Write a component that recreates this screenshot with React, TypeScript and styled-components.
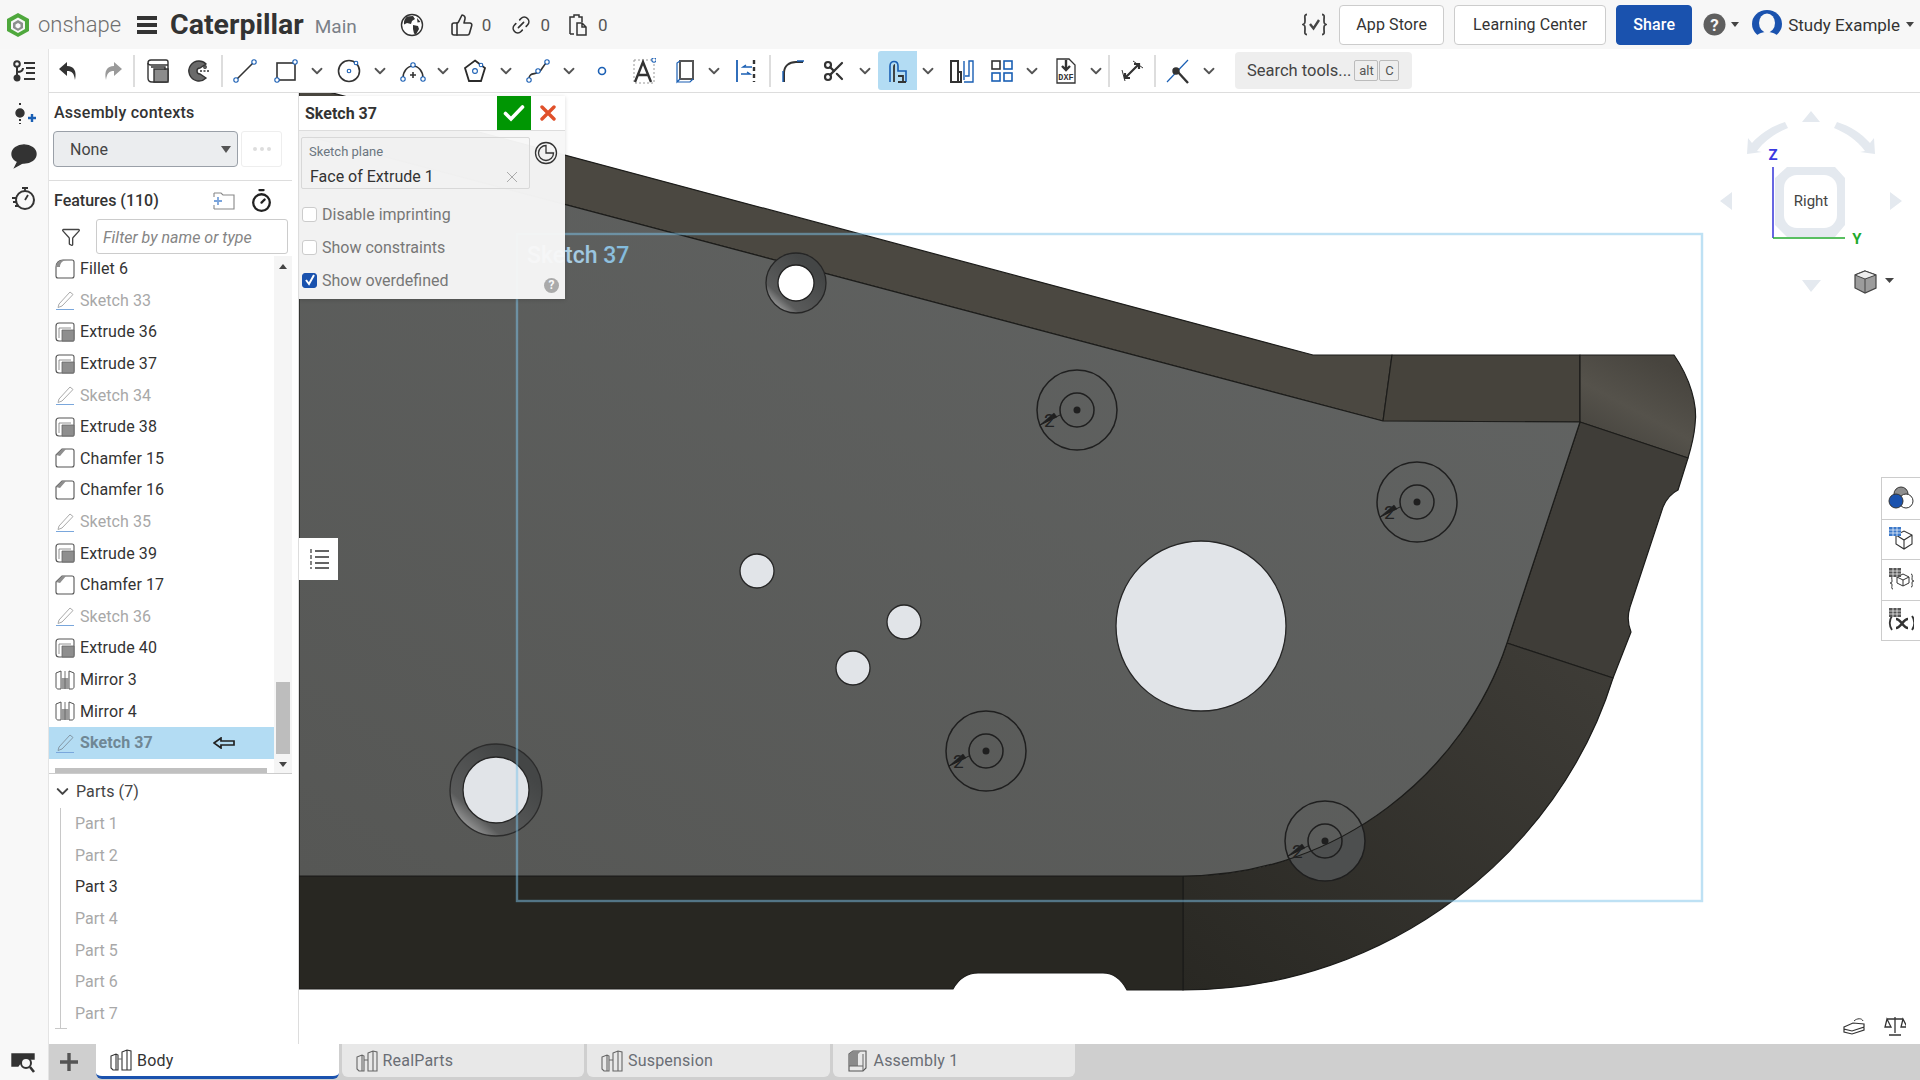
import React from "react";
import styled, { createGlobalStyle } from "styled-components";
import { ChevronDown, Filter, Link2, Scissors, ThumbsUp, Timer } from "lucide-react";

const Global = createGlobalStyle`
  html, body { margin: 0; padding: 0; background: #fff; }
  * { box-sizing: border-box; }
  body { font-family: Roboto, "Liberation Sans", sans-serif; color: #333; font-size: 16px; }
`;

const BLUE = "#1a5fb4";
const INK = "#333";

const Page = styled.div`
  width: 1920px;
  height: 1080px;
  overflow: hidden;
  display: flex;
  flex-direction: column;
`;

/* ---------- top bar ---------- */
const TopBar = styled.header`
  height: 49px;
  background: #f7f7f7;
  display: flex;
  align-items: center;
  flex: none;
`;
const Wordmark = styled.span`
  font-size: 22px;
  font-weight: 300;
  color: #6f6f6f;
  margin-left: 8px;
`;
const Burger = styled.span`
  width: 20px;
  height: 18px;
  margin-left: 16px;
  border-top: 4px solid #333;
  border-bottom: 4px solid #333;
  position: relative;
  &::after {
    content: "";
    position: absolute;
    left: 0;
    right: 0;
    top: 3px;
    height: 4px;
    background: #333;
  }
`;
const DocTitle = styled.span`
  font-size: 28.5px;
  font-weight: 700;
  margin-left: 13px;
  color: #333;
`;
const Workspace = styled.span`
  font-size: 19px;
  color: #7a8088;
  margin-left: 11px;
  margin-top: 3px;
`;
const Stat = styled.span<{ $ml: number }>`
  display: flex;
  align-items: center;
  gap: 8px;
  margin-left: ${(p) => p.$ml}px;
  color: #555;
  font-size: 17px;
`;
const TopRight = styled.div`
  margin-left: auto;
  display: flex;
  align-items: center;
  padding-right: 6px;
`;
const TopButton = styled.button<{ $w: number; $primary?: boolean }>`
  width: ${(p) => p.$w}px;
  height: 40px;
  margin-left: 10px;
  border-radius: 4px;
  border: 1px solid ${(p) => (p.$primary ? "#1a52ae" : "#ccc")};
  background: ${(p) => (p.$primary ? "#1a52ae" : "#fff")};
  color: ${(p) => (p.$primary ? "#fff" : "#333")};
  font: ${(p) => (p.$primary ? 500 : 400)} 16px Roboto, sans-serif;
  letter-spacing: 0.1px;
  padding: 0;
`;
const Caret = styled.span<{ $ml?: number; $c?: string; $big?: boolean }>`
  width: 0;
  height: 0;
  margin-left: ${(p) => p.$ml ?? 0}px;
  border-left: ${(p) => (p.$big ? 5.5 : 4.5)}px solid transparent;
  border-right: ${(p) => (p.$big ? 5.5 : 4.5)}px solid transparent;
  border-top: ${(p) => (p.$big ? 7 : 5)}px solid ${(p) => p.$c ?? "#444"};
`;
const UserName = styled.span`
  margin-left: 6px;
  font-size: 17px;
  color: #333;
`;

/* ---------- body ---------- */
const Body = styled.div`
  flex: 1;
  display: flex;
  min-height: 0;
`;
const Rail = styled.nav`
  width: 49px;
  flex: none;
  background: #f8f8f8;
  border-right: 1px solid #e4e4e4;
  display: flex;
  flex-direction: column;
  align-items: center;
  padding-top: 9px;
  gap: 16.5px;
`;
const RailBottom = styled.div`
  margin-top: auto;
  height: 36px;
  display: flex;
  align-items: center;
`;
const Main = styled.div`
  flex: 1;
  min-width: 0;
  display: flex;
  flex-direction: column;
`;
const Toolbar = styled.div`
  height: 44px;
  flex: none;
  display: flex;
  align-items: center;
  background: #fff;
  border-bottom: 1px solid #ddd;
  position: relative;
  z-index: 3;
`;
const ToolSlot = styled.span<{ $ml: number; $w?: number; $active?: boolean }>`
  width: ${(p) => p.$w ?? 26}px;
  height: 39px;
  margin-left: ${(p) => p.$ml}px;
  display: flex;
  align-items: center;
  justify-content: center;
  flex: none;
  border-radius: 3px 0 0 3px;
  background: ${(p) => (p.$active ? "#b3dcf3" : "transparent")};
  color: #444;
`;
const Sep = styled.span<{ $ml: number }>`
  width: 2px;
  height: 32px;
  background: #ddd;
  margin-left: ${(p) => p.$ml}px;
  flex: none;
`;
const SearchBox = styled.div`
  margin-left: 20px;
  width: 177px;
  height: 37px;
  border-radius: 4px;
  background: #eee;
  display: flex;
  align-items: center;
  padding-left: 12px;
  color: #444;
  font-size: 16.5px;
  flex: none;
`;
const Kbd = styled.span<{ $w: number; $ml: number }>`
  width: ${(p) => p.$w}px;
  height: 21px;
  margin-left: ${(p) => p.$ml}px;
  border: 1px solid #bbb;
  border-radius: 2px;
  font-size: 13px;
  color: #555;
  display: flex;
  align-items: center;
  justify-content: center;
`;
const Work = styled.div`
  flex: 1;
  display: flex;
  min-height: 0;
`;

/* ---------- left panel ---------- */
const Panel = styled.aside`
  width: 250px;
  flex: none;
  background: #fff;
  border-right: 1px solid #ddd;
  display: flex;
  flex-direction: column;
`;
const PanelHeading = styled.div<{ $wide?: boolean }>`
  height: 38px;
  flex: none;
  display: flex;
  align-items: center;
  padding-left: 5px;
  font-weight: 500;
  font-size: 16px;
  letter-spacing: ${(p) => (p.$wide ? 0.25 : 0)}px;
  color: #333;
`;
const SelectRow = styled.div`
  display: flex;
  padding-left: 4px;
  gap: 3px;
  height: 36px;
  flex: none;
`;
const FakeSelect = styled.div`
  width: 185px;
  border: 1px solid #9aa0a8;
  border-radius: 4px;
  background: #ebedef;
  display: flex;
  align-items: center;
  justify-content: space-between;
  padding: 0 6px 0 16px;
  color: #444;
`;
const DotsButton = styled.div`
  width: 41px;
  border: 1px solid #eee;
  border-radius: 3px;
  display: flex;
  align-items: center;
  justify-content: center;
  gap: 3px;
`;
const Dot = styled.i`
  width: 4px;
  height: 4px;
  border-radius: 50%;
  background: #ddd;
`;
const Divider = styled.div`
  width: 243px;
  height: 1px;
  margin-top: 13px;
  background: #ddd;
  flex: none;
`;
const HeadingIcons = styled.div`
  margin-left: auto;
  display: flex;
  align-items: center;
  gap: 13px;
  padding-right: 24px;
`;
const FilterRow = styled.div`
  height: 35px;
  flex: none;
  display: flex;
  align-items: center;
  padding-left: 12px;
  color: #444;
`;
const FilterInput = styled.div`
  width: 192px;
  height: 35px;
  margin-left: 15px;
  border: 1px solid #ccc;
  border-radius: 3px;
  display: flex;
  align-items: center;
  padding: 1px 0 0 6px;
  font-style: italic;
  font-size: 16px;
  color: #858585;
`;
const ListArea = styled.div`
  height: 518px;
  margin-top: 2px;
  flex: none;
  position: relative;
  display: flex;
  overflow: hidden;
  border-bottom: 1px solid #ccc;
  width: 243px;
`;
const Rows = styled.div`
  width: 225px;
  margin-top: -3px;
  flex: none;
`;
const Row = styled.div<{ $dim?: boolean; $selected?: boolean }>`
  height: 31.6px;
  display: flex;
  align-items: center;
  padding-left: 6px;
  gap: 5px;
  font-size: 16px;
  letter-spacing: 0.1px;
  font-weight: ${(p) => (p.$selected ? 700 : 400)};
  color: ${(p) => (p.$selected ? "#6f8795" : p.$dim ? "#a8a8a8" : "#333")};
  background: ${(p) => (p.$selected ? "#b3dcf3" : "transparent")};
`;
const RollbackArrow = styled.span`
  margin-left: 55px;
  display: flex;
`;
const ScrollTrack = styled.div`
  width: 18px;
  margin-left: 0;
  background: #f5f5f5;
  display: flex;
  flex-direction: column;
  align-items: center;
  padding: 8px 0 6px;
`;
const ScrollThumb = styled.div`
  width: 14px;
  height: 72px;
  background: #bdbdbd;
  margin-top: auto;
  margin-bottom: 8px;
`;
const ScrollArrow = styled.span<{ $up?: boolean }>`
  width: 0;
  height: 0;
  border-left: 4.5px solid transparent;
  border-right: 4.5px solid transparent;
  ${(p) => (p.$up ? "border-bottom: 5px solid #444;" : "border-top: 5px solid #444;")}
`;
const HScroll = styled.div`
  position: absolute;
  left: 6px;
  bottom: 0;
  width: 212px;
  height: 5px;
  background: #c0c0c0;
`;
const PartsHeader = styled.div`
  height: 35px;
  flex: none;
  display: flex;
  align-items: center;
  gap: 4px;
  padding-left: 4px;
  font-size: 16px;
  letter-spacing: 0.1px;
  color: #444;
`;
const PartList = styled.div`
  margin: -1.5px 0 0 11px;
  padding-left: 14px;
  border-left: 1px solid #c8c8c8;
  position: relative;
  &::after {
    content: "";
    position: absolute;
    left: -6px;
    bottom: 0;
    width: 12px;
    height: 1px;
    background: #c8c8c8;
  }
`;
const PartRow = styled.div<{ $on?: boolean }>`
  height: 31.7px;
  display: flex;
  align-items: center;
  font-size: 16px;
  color: ${(p) => (p.$on ? "#333" : "#a8a8a8")};
`;

/* ---------- viewport ---------- */
const Viewport = styled.main`
  flex: 1;
  position: relative;
  min-width: 0;
  background: #fff;
  overflow: hidden;
`;
const ModelSvg = styled.svg`
  position: absolute;
  inset: 0;
  display: block;
`;
const Dialog = styled.section`
  position: absolute;
  left: -1px;
  top: 3px;
  width: 267px;
  height: 203px;
  background: rgba(247, 247, 247, 0.97);
  box-shadow: 0 1px 4px rgba(0, 0, 0, 0.15);
  z-index: 2;
`;
const DialogHead = styled.div`
  height: 35px;
  display: flex;
  align-items: stretch;
  background: #fff;
  border-bottom: 1px solid #ddd;
  font-weight: 700;
  font-size: 16px;
  color: #333;
`;
const DialogTitle = styled.div`
  flex: 1;
  display: flex;
  align-items: center;
  padding-left: 7px;
`;
const OkButton = styled.div`
  width: 34px;
  background: #009603;
  display: flex;
  align-items: center;
  justify-content: center;
`;
const CancelButton = styled.div`
  width: 34px;
  display: flex;
  align-items: center;
  justify-content: center;
`;
const PlaneRow = styled.div`
  display: flex;
  padding: 6px 0 0 3px;
  height: 66.5px;
`;
const PlaneField = styled.div`
  width: 229px;
  height: 52px;
  border: 1px solid #d8d8d8;
  border-radius: 2px;
  padding: 6px 12px 0 7px;
`;
const PlaneLabel = styled.div`
  font-size: 13px;
  line-height: 16px;
  color: #6b7680;
`;
const PlaneValue = styled.div`
  margin: 6.5px 0 0 1px;
  font-size: 16px;
  line-height: 20px;
  color: #333;
  display: flex;
  justify-content: space-between;
  align-items: center;
`;
const ClockSlot = styled.div`
  margin: 4px 0 0 4px;
`;
const CheckLine = styled.label`
  height: 33px;
  display: flex;
  align-items: center;
  padding-left: 4px;
  gap: 5px;
  font-size: 16px;
  color: #777;
`;
const Box = styled.span<{ $on?: boolean }>`
  width: 15px;
  height: 15px;
  border-radius: 3px;
  border: 1px solid ${(p) => (p.$on ? "#1a52ae" : "#ccc")};
  background: ${(p) => (p.$on ? "#1a52ae" : "#fff")};
  display: flex;
  align-items: center;
  justify-content: center;
`;
const HelpDot = styled.span`
  position: absolute;
  right: 6px;
  bottom: 6px;
  width: 15px;
  height: 15px;
  border-radius: 50%;
  background: #aaa;
  color: #f7f7f7;
  font-size: 12px;
  font-weight: 700;
  line-height: 15px;
  text-align: center;
`;
const ListToggle = styled.div`
  position: absolute;
  left: 0;
  top: 445px;
  width: 39px;
  height: 42px;
  background: #fff;
  display: flex;
  align-items: center;
  justify-content: center;
`;
const ViewCube = styled.svg`
  position: absolute;
  right: 10px;
  top: 17px;
`;
const SideTools = styled.div`
  position: absolute;
  right: 0;
  top: 384px;
  width: 39px;
  background: #fff;
  border: 1px solid #ccc;
  border-right: 0;
`;
const SideTool = styled.div`
  height: 40.5px;
  display: flex;
  align-items: center;
  justify-content: center;
  & + & {
    border-top: 1px solid #ccc;
  }
`;
const CornerTools = styled.div`
  position: absolute;
  right: 14px;
  bottom: 7px;
  display: flex;
  gap: 19px;
`;

/* ---------- tabs ---------- */
const TabBar = styled.div`
  height: 36px;
  flex: none;
  background: #cfcfcf;
  display: flex;
  align-items: flex-start;
`;
const AddTab = styled.div`
  width: 47px;
  height: 36px;
  padding-right: 8px;
  display: flex;
  align-items: center;
  justify-content: center;
  flex: none;
`;
const Tab = styled.div<{ $active?: boolean }>`
  width: 242.5px;
  height: ${(p) => (p.$active ? 35 : 33)}px;
  margin-right: 3px;
  padding-left: 14px;
  display: flex;
  align-items: center;
  gap: 5px;
  font-size: 16px;
  letter-spacing: 0.2px;
  flex: none;
  border-radius: 0 0 6px 6px;
  background: ${(p) => (p.$active ? "#fff" : "#e8e8e8")};
  color: ${(p) => (p.$active ? "#333" : "#6a6e75")};
  border-bottom: ${(p) => (p.$active ? "3px solid #1a52ae" : "0")};
`;

/* ---------- icons ---------- */
type IconProps = { children: React.ReactNode; s?: number; vb?: string };
const Ico = ({ children, s = 26, vb = "0 0 26 26" }: IconProps) => (
  <svg width={s} height={s} viewBox={vb} fill="none" stroke={INK} strokeWidth="1.4" style={{ display: "block", flex: "none" }}>
    {children}
  </svg>
);
const Knob = ({ x, y, r = 2.2 }: { x: number; y: number; r?: number }) => (
  <circle cx={x} cy={y} r={r} fill="#fff" stroke={BLUE} strokeWidth="1.1" />
);

const Logo = () => (
  <svg width="24" height="26" viewBox="0 0 24 26" style={{ marginLeft: 6, flex: "none" }}>
    <path d="M12 1 23 7v12L12 25 1 19V7Z" fill="#4fa83d" />
    <path d="M12 5.500 19 9.500v7.500L12 21 5 17V9.500Z" fill="#f7f7f7" />
    <path d="M12 8 17 11v5l-5 3-5-3v-5Z" fill="#8b8f8d" />
    <path d="M12 11l2.500 1.500v2.500L12 16.500 9.500 15v-2.500Z" fill="#f7f7f7" />
  </svg>
);
const Globe = () => (
  <svg width="24" height="24" viewBox="0 0 24 24" style={{ marginLeft: 43, flex: "none" }}>
    <circle cx="12" cy="12" r="10.500" fill="#fff" stroke="#333" strokeWidth="1.400" />
    <path d="M7 3.500 13 3l2 3-3 2-1 3-4-1-3 1.500C3.500 8 5 5 7 3.500ZM13 12l5 1 1 3-3 5.500-2-1-1-4.500ZM17 5l3.500 4-3 .5Z" fill="#333" />
  </svg>
);
const CopyIcon = () => (
  <svg width="22" height="24" viewBox="0 0 22 24" fill="none" stroke="#333" strokeWidth="1.500">
    <path d="M2 21V4h4V2h5v2h3v5M6 21H2M9 10h5l4 4v8H9ZM14 10v4h4" />
  </svg>
);
const Braces = () => (
  <svg width="25" height="23" viewBox="0 0 25 23" fill="none" stroke="#444" strokeWidth="1.800">
    <path d="M5 1.500C2 1.500 3 4 3 7s0 3.500-2 4.500c2 1 2 1.500 2 4.500s-1 5.500 2 5.500M20 1.500c3 0 2 2.500 2 5.500s0 3.500 2 4.500c-2 1-2 1.500-2 4.500s1 5.500-2 5.500" />
    <path d="M8 11l3.500 4.500L17 7" strokeWidth="2.400" />
  </svg>
);
const HelpIcon = () => (
  <svg width="23" height="23" viewBox="0 0 23 23">
    <circle cx="11.500" cy="11.500" r="11" fill="#5f5f5f" />
    <text x="11.500" y="17.500" fontSize="17" fontWeight="700" fill="#f7f7f7" textAnchor="middle" fontFamily="Roboto">?</text>
  </svg>
);
const Avatar = () => (
  <svg width="30" height="30" viewBox="0 0 30 30" style={{ marginLeft: 13, flex: "none" }}>
    <ellipse cx="15" cy="14" rx="15" ry="14" fill="#1a52ae" />
    <ellipse cx="15" cy="13" rx="8" ry="9.500" fill="#f7f7f7" />
    <path d="M3 30c1-6 6-8 12-8s11 2 12 8Z" fill="#f7f7f7" />
  </svg>
);

const RailTree = () => (
  <Ico>
    <circle cx="6" cy="6" r="2.800" strokeWidth="2" />
    <circle cx="6" cy="20" r="2.800" fill={INK} />
    <path d="M6 9v8M6 14c4 0 6-1 6-4" strokeWidth="2" />
    <path d="M13 5h11M15 10h9M15 15h9M13 21h11" strokeWidth="2.200" />
  </Ico>
);
const RailSequence = () => (
  <Ico>
    <path d="M9 2v4M9 18v5" strokeWidth="2" strokeDasharray="2 2" />
    <circle cx="9" cy="12" r="4" fill={INK} />
    <path d="M17 17h8M21 13v8" stroke={BLUE} strokeWidth="2.400" />
  </Ico>
);
const RailBubble = () => (
  <Ico>
    <ellipse cx="13" cy="11" rx="12" ry="9" fill={INK} />
    <path d="M7 18 4 24l9-5Z" fill={INK} />
  </Ico>
);
const RailTimer = () => (
  <Ico>
    <circle cx="14" cy="14" r="9" strokeWidth="2" />
    <path d="M11 2h6M14 2v3M14 14l3-5M1 12h4M2 16h4M4 20h3" strokeWidth="1.800" />
  </Ico>
);
const RailLens = () => (
  <Ico>
    <path d="M1 5h22v5H12l-5 7H1Z" fill={INK} />
    <circle cx="15" cy="14" r="5" fill="#f8f8f8" strokeWidth="2" />
    <path d="M19 18l4 5" strokeWidth="2.600" />
  </Ico>
);

const Undo = ({ c = INK }: { c?: string }) => (
  <svg width="26" height="26" viewBox="0 0 26 26" fill={c}>
    <path d="M11 4 3 11l8 7v-5c5 0 7 2 8 9 2-9-1-14-8-14Z" />
  </svg>
);
const Redo = () => (
  <svg width="26" height="26" viewBox="0 0 26 26" fill="#9a9a9a">
    <path d="M15 4l8 7-8 7v-5c-5 0-7 2-8 9-2-9 1-14 8-14Z" />
  </svg>
);
const ExtrudeIcon = ({ s = 26 }: { s?: number }) => (
  <Ico s={s}>
    <path d="M3 5c0-2 1-3 3-3h15c1.500 0 2 1 2 2v18c0 1-.5 2-2 2H7c-3 0-4-2-4-4Z" />
    <path d="M3 5c0 1 1 2 3 2h17" />
    <path d="M9 11h14v13H9Z" fill="#8c8c8c" />
    <path d="M6 9h14v3" />
  </Ico>
);
const RevolveIcon = () => (
  <Ico>
    <path d="M13 3a10 10 0 1 0 7 17l-6-4a3 3 0 0 1 0-6l6-4a10 10 0 0 0-7-3Z" fill="#6a6a6a" />
    <path d="M14 13h10" strokeDasharray="2 1.500" />
    <circle cx="19" cy="9" r="1.200" fill="#fff" />
  </Ico>
);
const LineTool = () => (
  <Ico>
    <path d="M5 21 21 5" strokeWidth="1.600" />
    <Knob x={4} y={22} />
    <Knob x={22} y={4} />
  </Ico>
);
const RectTool = () => (
  <Ico>
    <rect x="4" y="5" width="18" height="17" strokeWidth="1.600" />
    <Knob x={4} y={22} />
    <Knob x={22} y={4} />
  </Ico>
);
const CircleTool = () => (
  <Ico>
    <circle cx="13" cy="13" r="10.500" strokeWidth="1.600" />
    <Knob x={13} y={13} r={1.800} />
    <Knob x={20} y={5} r={1.800} />
  </Ico>
);
const ArcTool = () => (
  <Ico>
    <path d="M3 20a10 12 0 0 1 20 0" strokeWidth="1.600" />
    <path d="M13 14v6M10 17h6" strokeWidth="1.600" />
    <Knob x={3} y={21} />
    <Knob x={13} y={7} />
    <Knob x={23} y={21} />
  </Ico>
);
const PolyTool = () => (
  <Ico>
    <path d="M13 2.500 23 10l-4 13H7L3 10Z" stroke="#2b2b2b" strokeWidth="1.800" />
    <Knob x={13} y={13} r={2.400} />
    <Knob x={19} y={7} r={1.800} />
  </Ico>
);
const SplineTool = () => (
  <Ico>
    <path d="M4 21c0-8 8-3 12-9 2-3 3-5 6-8" strokeWidth="1.600" />
    <Knob x={4} y={22} />
    <Knob x={13} y={13} />
    <Knob x={22} y={4} />
  </Ico>
);
const PointTool = () => (
  <Ico>
    <circle cx="13" cy="13" r="3.500" stroke={BLUE} strokeWidth="1.600" />
  </Ico>
);
const TextTool = () => (
  <Ico>
    <rect x="4" y="2" width="20" height="23" stroke="#999" strokeWidth="1" strokeDasharray="2 2" />
    <path d="M5 24 13 4l8 20M8 17h10" strokeWidth="2.400" />
    <Knob x={24} y={2} />
  </Ico>
);
const BoxTool = () => (
  <Ico>
    <path d="M8 3h13v18H8Z" stroke="#555" strokeWidth="2" />
    <path d="M8 3 5 5v19l3-3M5 24h13l3-3" stroke={BLUE} strokeWidth="1.200" />
  </Ico>
);
const UseTool = () => (
  <Ico>
    <path d="M4 2v22" stroke={BLUE} strokeWidth="1.800" />
    <path d="M21 2v22" strokeWidth="2.400" strokeDasharray="4 3" />
    <path d="M19 9h-9l3-2M8 16h9l-3-2" stroke={BLUE} strokeWidth="1.400" />
  </Ico>
);
const FilletTool = () => (
  <Ico>
    <path d="M4 24V15C4 8 9 4 16 4h7" strokeWidth="2" />
    <path d="M3 24V13M17 3h7" stroke={BLUE} strokeWidth="1.400" />
  </Ico>
);
const OffsetTool = () => (
  <Ico>
    <path d="M5 24V8c0-6 8-6 8 0v5h8v11" stroke={BLUE} strokeWidth="1.600" />
    <path d="M9 24V9c0-2 1-2 1-2M13 24h8M13 18h5v6" strokeWidth="1.800" />
  </Ico>
);
const MirrorTool = () => (
  <Ico>
    <path d="M3 3h7v21H3ZM10 14h3v10h-3" strokeWidth="2" />
    <path d="M16 3v19M16 24h9V3h-4v15h-4" stroke={BLUE} strokeWidth="1.400" />
  </Ico>
);
const GridTool = () => (
  <Ico>
    <rect x="3" y="3" width="8" height="8" strokeWidth="1.600" />
    <rect x="15" y="3" width="8" height="8" stroke={BLUE} strokeWidth="1.600" />
    <rect x="3" y="15" width="8" height="8" stroke={BLUE} strokeWidth="1.600" />
    <rect x="15" y="15" width="8" height="8" stroke={BLUE} strokeWidth="1.600" />
  </Ico>
);
const DxfTool = () => (
  <Ico>
    <path d="M4 1h12l6 6v18H4Z" strokeWidth="1.300" />
    <path d="M13 2v9M9 8l4 4 4-4" strokeWidth="2.400" />
    <text x="13" y="22" fontSize="8.500" fontWeight="700" textAnchor="middle" fill={INK} stroke="none" fontFamily="Liberation Mono">DXF</text>
  </Ico>
);
const DimTool = () => (
  <Ico>
    <path d="M7 19 19 7M15 6l5 0 0 5M6 15l0 5 5 0" strokeWidth="2.200" />
    <path d="M3 12l3 11M14 3l10 7" strokeWidth="1" />
  </Ico>
);
const ConstructTool = () => (
  <Ico>
    <path d="M2 24 23 2" stroke={BLUE} strokeWidth="1.200" />
    <path d="M12 13 23 25" strokeWidth="2.400" />
    <circle cx="11" cy="13" r="3" fill={INK} />
  </Ico>
);

const Pencil = ({ dim }: { dim?: boolean }) => (
  <Ico s={20} vb="0 0 20 20">
    <path d="M4 14 15 2l3 2.500L7 16l-4 1.500Z" stroke={dim ? "#aaa" : "#8598a6"} strokeWidth="1" />
    <path d="M1 19.500h18" stroke="#7aa7dc" strokeWidth="1" />
  </Ico>
);
const ExtrudeSmall = () => (
  <Ico s={20} vb="0 0 20 20">
    <path d="M1 4c0-2 1-3 3-3h13c1 0 2 1 2 2v14c0 1-1 2-2 2H4c-2 0-3-1-3-3Z" strokeWidth="1.100" stroke="#555" />
    <path d="M7 8h12v11H7Z" fill="#8e8e8e" stroke="#666" strokeWidth="0.800" />
    <path d="M4 6h12M4 6v10" strokeWidth="0.800" stroke="#777" />
  </Ico>
);
const FilletSmall = () => (
  <Ico s={20} vb="0 0 20 20">
    <path d="M1 8c0-4 3-7 7-7h9c1 0 2 1 2 2v14c0 1-1 2-2 2H3c-1 0-2-1-2-2Z" strokeWidth="1.100" stroke="#555" />
    <path d="M1 8c0-4 3-7 7-7h4c-4 0-7 3-7 7Z" fill="#8e8e8e" stroke="none" />
  </Ico>
);
const ChamferSmall = () => (
  <Ico s={20} vb="0 0 20 20">
    <path d="M1 7l6-6h10c1 0 2 1 2 2v14c0 1-1 2-2 2H3c-1 0-2-1-2-2Z" strokeWidth="1.100" stroke="#555" />
    <path d="M1 7l6-6h4L5 8Z" fill="#8e8e8e" stroke="none" />
  </Ico>
);
const MirrorSmall = () => (
  <Ico s={20} vb="0 0 20 20">
    <path d="M1 3l5-2v18H3c-1 0-2-1-2-2ZM14 1l5 2v14c0 1-1 2-2 2h-3Z" stroke="#555" strokeWidth="1" />
    <path d="M6 8h8v11H6Z" fill="#9a9a9a" stroke="none" />
    <path d="M10 1v18" stroke="#666" strokeWidth="0.900" />
  </Ico>
);
const RollArrow = () => (
  <svg width="22" height="12" viewBox="0 0 22 12" fill="none" stroke="#222" strokeWidth="1.700">
    <path d="M1 6l7-5v3h13v4H8v3Z" />
  </svg>
);
const Studios = ({ dim }: { dim?: boolean }) => (
  <Ico s={22} vb="0 0 22 22">
    <path d="M1 7l5-2 2 1v15H3l-2-2ZM6 5v16" stroke={dim ? "#666" : "#333"} strokeWidth="1.100" />
    <path d="M12 3l5-2 4 1v19h-9ZM17 1v20" stroke={dim ? "#666" : "#333"} strokeWidth="1.100" />
    <path d="M8 10h4" stroke="#666" strokeWidth="1" />
  </Ico>
);
const AssemblyTab = () => (
  <Ico s={22} vb="0 0 22 22">
    <path d="M2 4l4-3h13v17l-3 3H2Z" stroke="#555" strokeWidth="1.100" />
    <path d="M2 4l4-3h8l-3 3v12H2Z" fill="#8a8a8a" stroke="none" />
    <path d="M2 16h14M16 4v17" stroke="#666" strokeWidth="1" />
  </Ico>
);
const FolderPlus = () => (
  <Ico s={24} vb="0 0 24 24">
    <path d="M2 5h7l2 2h11v14H2" stroke="#888" strokeWidth="1.100" />
    <path d="M2 5v4M2 17v4" stroke="#888" strokeWidth="1.100" />
    <path d="M2 13h8M6 9v8" stroke="#7aa4dc" strokeWidth="1.800" />
  </Ico>
);
const PartIcons = () => <Timer size={25} strokeWidth={2.2} color="#222" />;
const SlashCheck = () => (
  <svg width="22" height="18" viewBox="0 0 22 18" fill="none" stroke="#fff" strokeWidth="3.600" strokeLinecap="round">
    <path d="M2.500 9.500 8 15 19.500 3" />
  </svg>
);
const RedCross = () => (
  <svg width="16" height="16" viewBox="0 0 16 16" fill="none" stroke="#e0502a" strokeWidth="3.400" strokeLinecap="round">
    <path d="M2 2l12 12M14 2 2 14" />
  </svg>
);
const ClockRoll = () => (
  <Ico s={24} vb="0 0 24 24">
    <circle cx="12" cy="12" r="10.500" strokeWidth="1.300" />
    <path d="M12 4.500a7.500 7.500 0 1 0 7.500 7.500H12Z" strokeWidth="1.300" />
  </Ico>
);
const ListTreeIcon = () => (
  <Ico s={24} vb="0 0 24 24">
    <path d="M4 2v4M4 8v4M4 14v4M4 20v2" strokeWidth="1.200" />
    <path d="M8 4h14M8 10h14M8 16h14M8 21h14" strokeWidth="1.400" />
  </Ico>
);
const Appearance = () => (
  <svg width="26" height="26" viewBox="0 0 26 26" stroke="#333" strokeWidth="1">
    <circle cx="13" cy="9" r="7" fill="#8f8f8f" />
    <circle cx="18" cy="16" r="7" fill="#fff" />
    <circle cx="8" cy="16" r="7" fill="#1a52ae" />
  </svg>
);
const TableGlyph = ({ c }: { c: string }) => (
  <g>
    <rect x="1" y="1" width="12" height="9" fill={c} stroke="none" />
    <path d="M5 1v9M9 1v9M1 4h12M1 7h12" stroke="#fff" strokeWidth="0.700" />
  </g>
);
const CubeTable = () => (
  <Ico s={26} vb="0 0 26 26">
    <path d="M8 9l8-4 8 4v9l-8 5-8-5ZM8 9l8 5 8-5M16 14v9" strokeWidth="1.100" />
    <TableGlyph c="#3b78c9" />
  </Ico>
);
const BraceTable = () => (
  <Ico s={26} vb="0 0 26 26">
    <path d="M9 10l6-3 6 3v6l-6 3-6-3ZM9 10l6 3 6-3M15 13v6" strokeWidth="1" />
    <path d="M5 9c-2 0-1 3-1 5s-1 2-2 2c1 0 2 0 2 2s-1 4 1 4M23 7c2 0 1 3 1 5s1 2 2 2c-1 0-2 0-2 2s1 4-1 4" strokeWidth="1" />
    <TableGlyph c="#555" />
  </Ico>
);
const FxTable = () => (
  <Ico s={26} vb="0 0 26 26">
    <path d="M4 9c-3 4-3 10 0 14M24 9c3 4 3 10 0 14" strokeWidth="1.800" />
    <path d="M8 21c5 0 7-9 12-9M8 12c5 0 7 9 12 9" strokeWidth="2.600" />
    <TableGlyph c="#555" />
  </Ico>
);
const PlaneStack = () => (
  <Ico s={22} vb="0 0 22 22">
    <path d="M1 12 10 8l11 1v3L9 16l-8-2ZM1 14v3l8 2 12-4v-3" strokeWidth="1.200" />
    <path d="M11 6c3-3 8-3 9 0" strokeWidth="1" />
  </Ico>
);
const Balance = () => (
  <Ico s={22} vb="0 0 22 22">
    <path d="M11 2v16M5 20h12M3 4h16M3 4l-2 8h6ZM19 4l-2 8h6Z" strokeWidth="1.300" />
  </Ico>
);

/* ---------- model drawing: coordinates are page pixels, hence the viewBox ---------- */
const Target = ({ x, y }: { x: number; y: number }) => (
  <g fill="none" stroke="#1f1f1f" strokeWidth="1.500">
    <circle cx={x} cy={y} r="40" />
    <circle cx={x} cy={y} r="17" />
    <circle cx={x} cy={y} r="3.500" fill="#1f1f1f" stroke="none" />
    <path d={`M${x - 37} ${y + 15}l20-10`} strokeWidth="1" />
    <path d={`M${x - 37} ${y + 15}l14-12 3 4Z`} fill="#1f1f1f" strokeWidth="0.500" />
    <text x={x - 33} y={y + 17} fontSize="19" fill="#222" stroke="none" fontFamily="Roboto">2</text>
  </g>
);
const Hole = ({ x, y, r }: { x: number; y: number; r: number }) => (
  <circle cx={x} cy={y} r={r} fill="#e1e4e8" stroke="#262626" strokeWidth="1.300" />
);
const Model = () => (
  <ModelSvg width="1621" height="951" viewBox="299 93 1621 951">
    <defs>
      <linearGradient id="face" x1="0" y1="1" x2="1" y2="0">
        <stop offset="0" stopColor="#565755" />
        <stop offset="1" stopColor="#636564" />
      </linearGradient>
      <linearGradient id="corner" x1="0" y1="1" x2="0.600" y2="0">
        <stop offset="0" stopColor="#403e39" />
        <stop offset="0.550" stopColor="#55524b" />
        <stop offset="1" stopColor="#47443e" />
      </linearGradient>
      <linearGradient id="sweep" x1="1" y1="0" x2="0" y2="1">
        <stop offset="0" stopColor="#3f3d38" />
        <stop offset="1" stopColor="#292823" />
      </linearGradient>
      <linearGradient id="ring" x1="0" y1="1" x2="0.700" y2="0.200">
        <stop offset="0" stopColor="#d8d8d8" />
        <stop offset="0.350" stopColor="#5a5b5b" />
        <stop offset="1" stopColor="#444646" />
      </linearGradient>
      <linearGradient id="label" x1="0" y1="0" x2="1" y2="0">
        <stop offset="0" stopColor="#dfe5e8" />
        <stop offset="0.450" stopColor="#a9cde2" />
        <stop offset="1" stopColor="#7fb9dc" />
      </linearGradient>
    </defs>
    <g stroke="#1c1c1a" strokeWidth="1.200" strokeLinejoin="round">
      <path d="M299 84 1313 355H1392L1383 421 299 134Z" fill="#4b4841" />
      <path d="M1392 355H1580V422L1383 421Z" fill="#46433c" />
      <path d="M1580 355H1674C1690 378 1698 405 1695 425 1694 437 1691 448 1688 458L1580 422Z" fill="url(#corner)" />
      <path d="M1580 422 1688 458 1678 490Q1668 495 1663 507L1630 607Q1626 620 1631 632L1613 678 1507 643Z" fill="#3f3d38" />
      <path d="M1507 643 1613 678C1560 850 1390 990 1183 990V876C1340 876 1465 770 1507 643Z" fill="url(#sweep)" />
      <path d="M299 876H1183V990H1127Q1118 973 1103 973H978Q962 973 953 989H299Z" fill="#282722" />
      <circle cx="1325" cy="841" r="40" fill="#4d4f4f" stroke="none" />
      <path d="M299 134 1383 421 1580 422 1507 643C1465 770 1340 876 1183 876H299Z" fill="url(#face)" />
    </g>
    <Hole x={1201} y={626} r={85} />
    <Hole x={757} y={571} r={17} />
    <Hole x={904} y={622} r={17} />
    <Hole x={853} y={668} r={17} />
    <circle cx="796" cy="283" r="30" fill="url(#ring)" stroke="#262626" strokeWidth="1.300" />
    <circle cx="796" cy="283" r="18" fill="#fff" stroke="#222" strokeWidth="1.300" />
    <circle cx="496" cy="790" r="46" fill="url(#ring)" stroke="#2c2c2c" strokeWidth="1.300" />
    <Hole x={496} y={790} r={33} />
    <Target x={1077} y={410} />
    <Target x={1417} y={502} />
    <Target x={986} y={751} />
    <Target x={1325} y={841} />
    <rect x="517" y="234" width="1185" height="667" fill="none" stroke="#7ec3ea" strokeOpacity="0.500" strokeWidth="2.400" />
    <text x="527" y="263" fontSize="23" fontWeight="500" fill="url(#label)" fontFamily="Roboto">Sketch 37</text>
  </ModelSvg>
);
const Cube = () => (
  <ViewCube width="190" height="190" viewBox="1720 110 190 190">
    <g fill="#e4e9ef">
      <path d="M1811 111l9 11h-18ZM1720 201l12-9v18ZM1902 201l-12-9v18ZM1811 292l-9-12h19Z" />
      <path d="M1785 122l3 6c-12 5-23 12-31 23l5 1-15 2 1-16 4 5c9-10 20-17 33-21Z" />
      <path d="M1837 122l-3 6c12 5 23 12 31 23l-5 1 15 2-1-16-4 5c-9-10-20-17-33-21Z" />
      <path d="M1787 167h48l10 11v47l-10 12h-48l-12-12v-47Z" />
    </g>
    <rect x="1784" y="175" width="53" height="53" rx="13" fill="#fff" />
    <text x="1811" y="206" fontSize="15" textAnchor="middle" fill="#444" fontFamily="Roboto">Right</text>
    <path d="M1773 167v71" stroke="#3535d8" strokeWidth="1.500" />
    <path d="M1773 238h72" stroke="#22aa2c" strokeWidth="1.500" />
    <text x="1773" y="160" fontSize="15" fontWeight="700" textAnchor="middle" fill="#3a3ae0" fontFamily="Roboto">Z</text>
    <text x="1857" y="244" fontSize="15" fontWeight="700" textAnchor="middle" fill="#22aa2c" fontFamily="Roboto">Y</text>
    <path d="M1865 271l11 4v13l-11 5-10-5v-13Z" fill="#9c9c9c" stroke="#444" strokeWidth="1.200" />
    <path d="M1855 275l10 4 11-4-11-4Z" fill="#eee" stroke="#444" strokeWidth="1" />
    <path d="M1865 279v14" stroke="#444" strokeWidth="1" />
    <path d="M1885 278h9l-4.500 5Z" fill="#444" />
  </ViewCube>
);

const Chev = ({ ml }: { ml: number }) => (
  <ToolSlot $ml={ml} $w={12}>
    <ChevronDown size={18} strokeWidth={2.4} color="#555" style={{ flex: "none" }} />
  </ToolSlot>
);

const features: { name: string; kind: "fillet" | "sketch" | "extrude" | "chamfer" | "mirror" }[] = [
  { name: "Fillet 6", kind: "fillet" },
  { name: "Sketch 33", kind: "sketch" },
  { name: "Extrude 36", kind: "extrude" },
  { name: "Extrude 37", kind: "extrude" },
  { name: "Sketch 34", kind: "sketch" },
  { name: "Extrude 38", kind: "extrude" },
  { name: "Chamfer 15", kind: "chamfer" },
  { name: "Chamfer 16", kind: "chamfer" },
  { name: "Sketch 35", kind: "sketch" },
  { name: "Extrude 39", kind: "extrude" },
  { name: "Chamfer 17", kind: "chamfer" },
  { name: "Sketch 36", kind: "sketch" },
  { name: "Extrude 40", kind: "extrude" },
  { name: "Mirror 3", kind: "mirror" },
  { name: "Mirror 4", kind: "mirror" },
];

const rowIcon = {
  fillet: <FilletSmall />,
  sketch: <Pencil dim />,
  extrude: <ExtrudeSmall />,
  chamfer: <ChamferSmall />,
  mirror: <MirrorSmall />,
};

const parts = ["Part 1", "Part 2", "Part 3", "Part 4", "Part 5", "Part 6", "Part 7"];

export default function App() {
  return (
    <Page>
      <Global />
      <TopBar>
        <Logo />
        <Wordmark>onshape</Wordmark>
        <Burger />
        <DocTitle>Caterpillar</DocTitle>
        <Workspace>Main</Workspace>
        <Globe />
        <Stat $ml={26}>
          <ThumbsUp size={24} strokeWidth={1.6} color="#333" />0
        </Stat>
        <Stat $ml={19}>
          <Link2 size={22} strokeWidth={1.8} color="#333" style={{ transform: "rotate(-45deg)" }} />0
        </Stat>
        <Stat $ml={18}>
          <CopyIcon />0
        </Stat>
        <TopRight>
          <Braces />
          <TopButton $w={105} style={{ marginLeft: 12 }}>App Store</TopButton>
          <TopButton $w={152}>Learning Center</TopButton>
          <TopButton $w={76} $primary>Share</TopButton>
          <span style={{ width: 11 }} />
          <HelpIcon />
          <Caret $ml={5} />
          <Avatar />
          <UserName>Study Example</UserName>
          <Caret $ml={6} />
        </TopRight>
      </TopBar>
      <Body>
        <Rail>
          <RailTree />
          <RailSequence />
          <RailBubble />
          <RailTimer />
          <RailBottom>
            <RailLens />
          </RailBottom>
        </Rail>
        <Main>
          <Toolbar>
            <ToolSlot $ml={7}><Undo /></ToolSlot>
            <ToolSlot $ml={17}><Redo /></ToolSlot>
            <Sep $ml={8} />
            <ToolSlot $ml={10}><ExtrudeIcon /></ToolSlot>
            <ToolSlot $ml={15}><RevolveIcon /></ToolSlot>
            <Sep $ml={9} />
            <ToolSlot $ml={9}><LineTool /></ToolSlot>
            <ToolSlot $ml={15}><RectTool /></ToolSlot>
            <Chev ml={12} />
            <ToolSlot $ml={13}><CircleTool /></ToolSlot>
            <Chev ml={12} />
            <ToolSlot $ml={14}><ArcTool /></ToolSlot>
            <Chev ml={11} />
            <ToolSlot $ml={13}><PolyTool /></ToolSlot>
            <Chev ml={12} />
            <ToolSlot $ml={13}><SplineTool /></ToolSlot>
            <Chev ml={12} />
            <ToolSlot $ml={14}><PointTool /></ToolSlot>
            <ToolSlot $ml={15}><TextTool /></ToolSlot>
            <ToolSlot $ml={16}><BoxTool /></ToolSlot>
            <Chev ml={10} />
            <ToolSlot $ml={13}><UseTool /></ToolSlot>
            <Sep $ml={10} />
            <ToolSlot $ml={9}><FilletTool /></ToolSlot>
            <ToolSlot $ml={15}><Scissors size={24} strokeWidth={2.2} color="#333" /></ToolSlot>
            <Chev ml={12} />
            <ToolSlot $ml={7} $w={39} $active><OffsetTool /></ToolSlot>
            <Chev ml={5} />
            <ToolSlot $ml={14}><MirrorTool /></ToolSlot>
            <ToolSlot $ml={15}><GridTool /></ToolSlot>
            <Chev ml={11} />
            <ToolSlot $ml={15}><DxfTool /></ToolSlot>
            <Chev ml={11} />
            <Sep $ml={6} />
            <ToolSlot $ml={9}><DimTool /></ToolSlot>
            <Sep $ml={9} />
            <ToolSlot $ml={9}><ConstructTool /></ToolSlot>
            <Chev ml={12} />
            <SearchBox>
              Search tools...
              <Kbd $w={24} $ml={3}>alt</Kbd>
              <Kbd $w={20} $ml={1}>C</Kbd>
            </SearchBox>
          </Toolbar>
          <Work>
            <Panel>
              <PanelHeading $wide>Assembly contexts</PanelHeading>
              <SelectRow>
                <FakeSelect>
                  None
                  <Caret $c="#555" $big />
                </FakeSelect>
                <DotsButton>
                  <Dot />
                  <Dot />
                  <Dot />
                </DotsButton>
              </SelectRow>
              <Divider />
              <PanelHeading>
                Features (110)
                <HeadingIcons>
                  <FolderPlus />
                  <PartIcons />
                </HeadingIcons>
              </PanelHeading>
              <FilterRow>
                <Filter size={20} strokeWidth={1.6} />
                <FilterInput>Filter by name or type</FilterInput>
              </FilterRow>
              <ListArea>
                <Rows>
                  {features.map((f) => (
                    <Row key={f.name} $dim={f.kind === "sketch"}>
                      {rowIcon[f.kind]}
                      {f.name}
                    </Row>
                  ))}
                  <Row $selected>
                    <Pencil />
                    Sketch 37
                    <RollbackArrow>
                      <RollArrow />
                    </RollbackArrow>
                  </Row>
                </Rows>
                <ScrollTrack>
                  <ScrollArrow $up />
                  <ScrollThumb />
                  <ScrollArrow />
                </ScrollTrack>
                <HScroll />
              </ListArea>
              <PartsHeader>
                <ChevronDown size={19} strokeWidth={2.6} color="#444" />
                Parts (7)
              </PartsHeader>
              <PartList>
                {parts.map((p) => (
                  <PartRow key={p} $on={p === "Part 3"}>{p}</PartRow>
                ))}
              </PartList>
            </Panel>
            <Viewport>
              <Model />
              <Dialog>
                <DialogHead>
                  <DialogTitle>Sketch 37</DialogTitle>
                  <OkButton><SlashCheck /></OkButton>
                  <CancelButton><RedCross /></CancelButton>
                </DialogHead>
                <PlaneRow>
                  <PlaneField>
                    <PlaneLabel>Sketch plane</PlaneLabel>
                    <PlaneValue>
                      Face of Extrude 1
                      <svg width="10" height="10" viewBox="0 0 10 10" stroke="#aaa" strokeWidth="1">
                        <path d="M0 0l10 10M10 0 0 10" />
                      </svg>
                    </PlaneValue>
                  </PlaneField>
                  <ClockSlot><ClockRoll /></ClockSlot>
                </PlaneRow>
                <CheckLine><Box />Disable imprinting</CheckLine>
                <CheckLine><Box />Show constraints</CheckLine>
                <CheckLine>
                  <Box $on>
                    <svg width="12" height="12" viewBox="0 0 12 12" fill="none" stroke="#fff" strokeWidth="2">
                      <path d="M2 6l3 4 5-9" />
                    </svg>
                  </Box>
                  Show overdefined
                </CheckLine>
                <HelpDot>?</HelpDot>
              </Dialog>
              <ListToggle><ListTreeIcon /></ListToggle>
              <Cube />
              <SideTools>
                <SideTool><Appearance /></SideTool>
                <SideTool><CubeTable /></SideTool>
                <SideTool><BraceTable /></SideTool>
                <SideTool><FxTable /></SideTool>
              </SideTools>
              <CornerTools>
                <PlaneStack />
                <Balance />
              </CornerTools>
            </Viewport>
          </Work>
          <TabBar>
            <AddTab>
              <svg width="18" height="18" viewBox="0 0 18 18" stroke="#555" strokeWidth="3.400">
                <path d="M9 0v18M0 9h18" />
              </svg>
            </AddTab>
            <Tab $active><Studios />Body</Tab>
            <Tab><Studios dim />RealParts</Tab>
            <Tab><Studios dim />Suspension</Tab>
            <Tab><AssemblyTab />Assembly 1</Tab>
          </TabBar>
        </Main>
      </Body>
    </Page>
  );
}
